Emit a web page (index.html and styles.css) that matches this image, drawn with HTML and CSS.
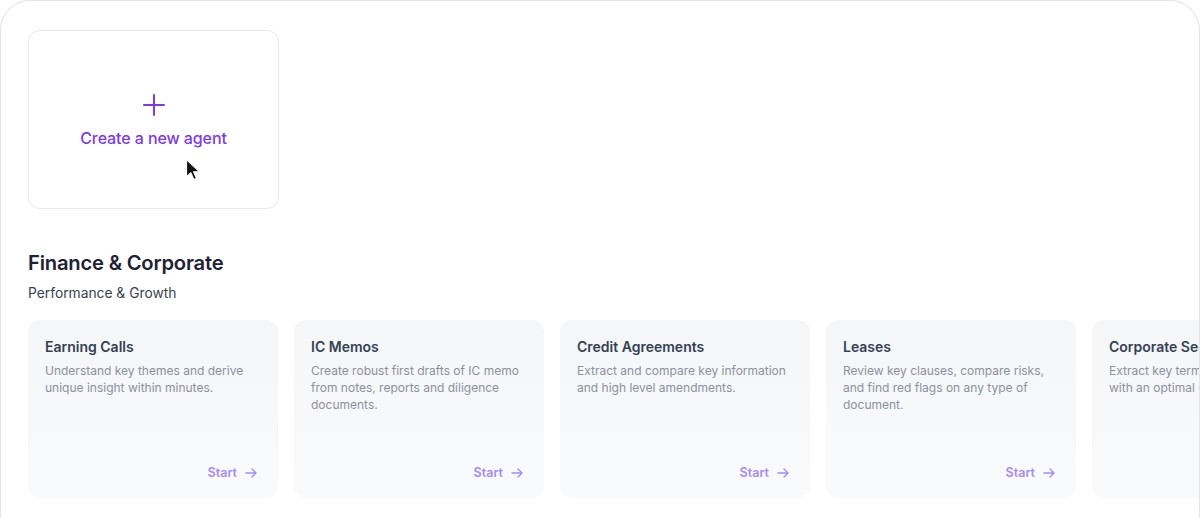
FILE: index.html
```html
<!DOCTYPE html>
<html lang="en">
<head>
<meta charset="utf-8">
<title>Agents</title>
<link rel="stylesheet" href="styles.css">
</head>
<body>
<div class="frame">
  <div class="create-card">
    <svg class="plus" width="24" height="24" viewBox="0 0 24 24"><path d="M12 2v20M2 12h20" stroke="#7c3aed" stroke-width="2" stroke-linecap="round" fill="none"/></svg>
    <div class="create-label">Create a new agent</div>
    <svg class="cursor" width="16" height="24" viewBox="0 0 16 24"><path d="M1.5 1.5v17.5l4.3-4.2 3 6.8 2.8-1.2-3-6.6h6z" fill="#111" stroke="#fff" stroke-width="1.2" stroke-linejoin="round"/></svg>
  </div>

  <h2 class="section-title">Finance &amp; Corporate</h2>
  <div class="section-sub">Performance &amp; Growth</div>

  <div class="cards">
    <div class="card">
      <div class="card-title">Earning Calls</div>
      <div class="card-desc">Understand key themes and derive unique insight within minutes.</div>
      <div class="card-start">Start <svg width="14" height="14" viewBox="0 0 14 14"><path d="M2 7h10M8 3l4 4-4 4" stroke="#a78bfa" stroke-width="1.4" fill="none" stroke-linecap="round" stroke-linejoin="round"/></svg></div>
    </div>
    <div class="card">
      <div class="card-title">IC Memos</div>
      <div class="card-desc">Create robust first drafts of IC memo from notes, reports and diligence documents.</div>
      <div class="card-start">Start <svg width="14" height="14" viewBox="0 0 14 14"><path d="M2 7h10M8 3l4 4-4 4" stroke="#a78bfa" stroke-width="1.4" fill="none" stroke-linecap="round" stroke-linejoin="round"/></svg></div>
    </div>
    <div class="card">
      <div class="card-title">Credit Agreements</div>
      <div class="card-desc">Extract and compare key information and high level amendments.</div>
      <div class="card-start">Start <svg width="14" height="14" viewBox="0 0 14 14"><path d="M2 7h10M8 3l4 4-4 4" stroke="#a78bfa" stroke-width="1.4" fill="none" stroke-linecap="round" stroke-linejoin="round"/></svg></div>
    </div>
    <div class="card">
      <div class="card-title">Leases</div>
      <div class="card-desc">Review key clauses, compare risks, and find red flags on any type of document.</div>
      <div class="card-start">Start <svg width="14" height="14" viewBox="0 0 14 14"><path d="M2 7h10M8 3l4 4-4 4" stroke="#a78bfa" stroke-width="1.4" fill="none" stroke-linecap="round" stroke-linejoin="round"/></svg></div>
    </div>
    <div class="card">
      <div class="card-title">Corporate Secretarial</div>
      <div class="card-desc">Extract key terms and obligations with an optimal degree of accuracy.</div>
      <div class="card-start">Start <svg width="14" height="14" viewBox="0 0 14 14"><path d="M2 7h10M8 3l4 4-4 4" stroke="#a78bfa" stroke-width="1.4" fill="none" stroke-linecap="round" stroke-linejoin="round"/></svg></div>
    </div>
  </div>
</div>
</body>
</html>
```

FILE: styles.css
```css
html, body {
  margin: 0;
  padding: 0;
  background: #fff;
  height: 100%;
  overflow: hidden;
}
body {
  font-family: "Inter", "Noto Sans", sans-serif;
}
.frame {
  box-sizing: border-box;
  width: 1200px;
  height: 518px;
  border: 1px solid #e4e4e7;
  border-bottom: none;
  border-radius: 30px 30px 0 0;
  padding: 29px 0 0 27px;
  overflow: hidden;
}
.create-card {
  position: relative;
  box-sizing: border-box;
  width: 251px;
  height: 179px;
  border: 1.5px solid #e8e8ee;
  border-radius: 12px;
  display: flex;
  flex-direction: column;
  align-items: center;
  padding-top: 62px;
}
.plus {
  display: block;
}
.create-label {
  margin-top: 11px;
  font-size: 16px;
  font-weight: 500;
  color: #7c3aed;
  line-height: 20px;
  letter-spacing: -0.1px;
}
.cursor {
  position: absolute;
  left: 156px;
  top: 127px;
}
.section-title {
  margin: 40px 0 0 0;
  font-size: 20.2px;
  line-height: 28px;
  font-weight: 600;
  color: #1e2235;
  letter-spacing: -0.2px;
}
.section-sub {
  margin-top: 6px;
  font-size: 13.8px;
  line-height: 20px;
  color: #3a3f50;
}
.cards {
  margin-top: 17px;
  display: flex;
  gap: 16px;
}
.card {
  flex: 0 0 250px;
  box-sizing: border-box;
  height: 178px;
  border-radius: 12px;
  background: linear-gradient(180deg, #f5f6f8 0%, #f9fafb 100%);
  padding: 17px 20px 15px 17px;
  display: flex;
  flex-direction: column;
}
.card-title {
  font-size: 14px;
  line-height: 20px;
  font-weight: 600;
  color: #334155;
  white-space: nowrap;
}
.card-desc {
  margin-top: 5px;
  font-size: 12px;
  line-height: 17px;
  color: #8b91a0;
}
.card-start {
  margin-top: auto;
  align-self: flex-end;
  display: flex;
  align-items: center;
  gap: 7px;
  font-size: 12.5px;
  line-height: 20px;
  font-weight: 600;
  color: #a78bfa;
}
.card-start svg {
  display: block;
}
```
